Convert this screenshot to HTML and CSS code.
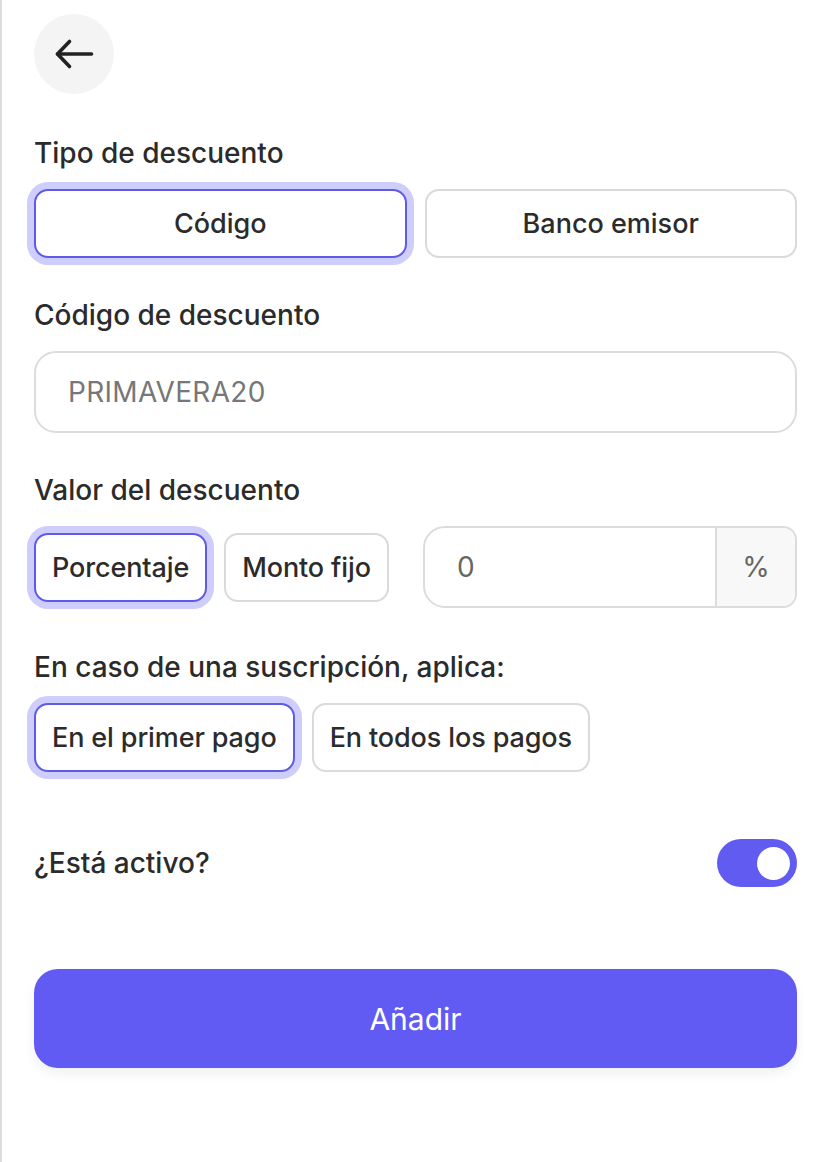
FILE: index.html
```html
<!DOCTYPE html>
<html lang="es">
<head>
<meta charset="utf-8">
<title>Descuento</title>
<link rel="stylesheet" href="styles.css">
</head>
<body>
<div class="page">
  <button class="back" aria-label="Volver">
    <svg width="40" height="40" viewBox="0 0 40 40" fill="none" stroke="#222" stroke-width="3.6" stroke-linecap="round" stroke-linejoin="round">
      <path d="M37.5 20H3.5"/>
      <path d="M15.5 7.5L3.5 20l12 12.5"/>
    </svg>
  </button>

  <div class="label first">Tipo de descuento</div>
  <div class="seg two">
    <button class="opt active">Código</button>
    <button class="opt">Banco emisor</button>
  </div>

  <div class="label">Código de descuento</div>
  <div class="input">PRIMAVERA20</div>

  <div class="label">Valor del descuento</div>
  <div class="row">
    <button class="opt chip active">Porcentaje</button>
    <button class="opt chip">Monto fijo</button>
    <div class="group">
      <div class="group-val">0</div>
      <div class="group-add">%</div>
    </div>
  </div>

  <div class="label sub">En caso de una suscripción, aplica:</div>
  <div class="row">
    <button class="opt chip active">En el primer pago</button>
    <button class="opt chip">En todos los pagos</button>
  </div>

  <div class="active-row">
    <span class="active-label">¿Está activo?</span>
    <span class="toggle"><span class="knob"></span></span>
  </div>

  <button class="submit">Añadir</button>
</div>
</body>
</html>
```
FILE: styles.css
```css
* { box-sizing: border-box; }
html, body { margin: 0; padding: 0; background: #fff; }
body {
  font-family: Inter, "Noto Sans", sans-serif;
  color: #2b2b2b;
}
.page {
  width: 828px;
  min-height: 1162px;
  border-left: 2px solid #dcdcdc;
  padding: 14px 31px 0 32px;
  display: flex;
  flex-direction: column;
}
button { font-family: inherit; }
.back {
  width: 80px;
  height: 80px;
  border-radius: 50%;
  border: none;
  background: #f4f4f4;
  display: flex;
  align-items: center;
  justify-content: center;
  padding: 0;
  margin-bottom: 42px;
}
.label {
  font-size: 28px;
  line-height: 34px;
  font-weight: 500;
  color: #2b2b2b;
  margin-top: 40px;
  margin-bottom: 19px;
}
.label.first { margin-top: 0; }
.label.sub { margin-top: 42px; }
.seg {
  display: flex;
  gap: 18px;
}
.seg .opt { flex: 1; }
.opt {
  height: 69px;
  background: #fff;
  border: 2px solid #dadada;
  border-radius: 14px;
  font-size: 27px;
  font-weight: 500;
  color: #2b2b2b;
  padding: 0 16px;
}
.chip {
  flex: none;
  letter-spacing: -0.12px;
  padding: 0 16px;
}
.opt.active {
  border-color: #5f5be8;
  box-shadow: 0 0 0 7px #cfcdfb;
}
.row {
  display: flex;
  align-items: center;
  gap: 17px;
}
.input {
  height: 82px;
  border: 2px solid #dcdcdc;
  border-radius: 22px;
  padding: 0 32px;
  display: flex;
  align-items: center;
  font-size: 28px;
  color: #777;
  letter-spacing: 0.3px;
}
.group {
  flex: 1;
  height: 82px;
  border: 2px solid #dcdcdc;
  border-radius: 22px 14px 14px 22px;
  display: flex;
  overflow: hidden;
  margin-left: 17px;
}
.group-val {
  flex: 1;
  display: flex;
  align-items: center;
  padding-left: 32px;
  font-size: 28px;
  color: #666;
}
.group-add {
  width: 80px;
  border-left: 2px solid #dcdcdc;
  background: #f8f8f8;
  display: flex;
  align-items: center;
  justify-content: center;
  font-size: 28px;
  color: #666;
}
.active-row {
  margin-top: 67px;
  height: 48px;
  display: flex;
  align-items: center;
  justify-content: space-between;
}
.active-label {
  font-size: 28px;
  font-weight: 500;
  color: #2b2b2b;
}
.toggle {
  width: 80px;
  height: 48px;
  border-radius: 24px;
  background: #615bf2;
  display: flex;
  align-items: center;
  justify-content: flex-end;
  padding-right: 7px;
}
.knob {
  width: 33px;
  height: 33px;
  border-radius: 50%;
  background: #fff;
}
.submit {
  margin-top: 82px;
  height: 99px;
  border: none;
  border-radius: 24px;
  background: #615bf3;
  color: #fff;
  font-size: 30px;
  font-weight: 400;
  box-shadow: 0 6px 12px rgba(0,0,0,0.06);
}
```
